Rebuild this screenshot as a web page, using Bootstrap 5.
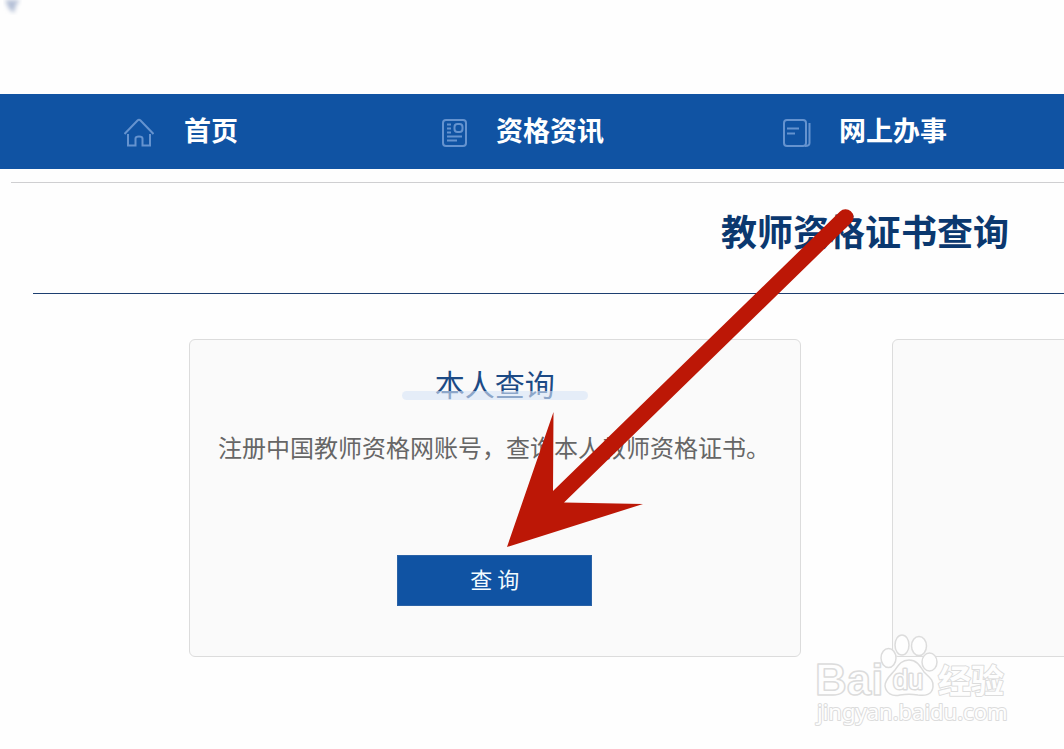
<!DOCTYPE html>
<html lang="zh-CN">
<head>
<meta charset="utf-8">
<meta name="viewport" content="width=device-width, initial-scale=1">
<title>教师资格证书查询</title>
<link href="https://cdn.jsdelivr.net/npm/bootstrap@5.3.0/dist/css/bootstrap.min.css" rel="stylesheet">
<style>
  body { font-family: "Noto Sans CJK SC", sans-serif; background: #fefefe; min-height: 100vh; overflow: hidden; }
  .site-head { height: 94px; }
  .head-mark { width: 28px; height: 24px; display: block; }
  .site-nav { background: #1053a3; height: 75px; padding: 0 0 4px 124px; }
  .nav-grid { display: grid; grid-template-columns: 318px 341px 1fr; width: 100%; }
  .nav-item-link { color: #fff; font-size: 27px; line-height: 40px; font-weight: 700; text-decoration: none; white-space: nowrap; }
  .nav-item-link svg { width: 30px; height: 30px; fill: none; stroke: #6593cf; stroke-width: 2; margin-top: 6px; flex: none; }
  .gap-home { gap: 30px; }
  .gap-doc { gap: 24px; }
  .gap-work { gap: 26px; }
  .top-rule { height: 1px; background: #cfcfd1; margin: 13px 0 0 11px; }
  .title-bar { margin-left: 33px; padding: 20px 55px 0 0; height: 111px; border-bottom: 1px solid #1d3f70; }
  .title-bar h1 { font-size: 36px; line-height: 54px; font-weight: 700; color: #0b386f; margin: 0; }
  .query-row { margin: 45px 0 0 189px; gap: 91px; }
  .query-card { flex: 0 0 calc(70% - 1px); height: 318px; background: #fafafa; border: 1px solid #dcdcdc; border-radius: 6px; padding: 22px 28px 0; }
  .query-name { position: relative; width: 186px; font-size: 30px; line-height: 42px; color: #1c4a85; text-align: center; font-weight: 400; margin: 0; }
  .query-name::after { content: ""; position: absolute; left: 0; right: 0; bottom: 4px; height: 9px; border-radius: 5px; background: rgba(215, 228, 247, .6); }
  .query-text { font-size: 24px; line-height: 36px; color: #666; margin: 25px 0 0; white-space: nowrap; }
  .query-btn { width: 195px; height: 51px; margin-top: 90px; border-radius: 0; background: #1053a3; border: 1px solid #2a62a6; color: #f2fbff; font-size: 22px; line-height: 32px; padding: 0 0 6px; }
  .query-btn:hover { background: #0c468c; color: #fff; }
  .pointer-arrow { position: absolute; left: 500px; top: 200px; width: 370px; height: 360px; pointer-events: none; }
  .watermark { position: absolute; left: 810px; top: 626px; width: 204px; height: 104px; pointer-events: none; }
</style>
</head>
<body class="position-relative">
<header>
  <div class="site-head">
    <svg class="head-mark" viewBox="0 0 28 24" aria-hidden="true">
      <defs><filter id="soft"><feGaussianBlur stdDeviation="2"/></filter></defs>
      <path d="M5 0H20L16 5L14 13L9 9Z" fill="#b4bfd6" filter="url(#soft)"/>
    </svg>
  </div>
  <nav class="site-nav d-flex align-items-center" aria-label="主导航">
    <div class="nav-grid">
      <a href="#" class="nav-item-link d-flex align-items-center gap-home">
        <svg viewBox="0 0 30 30" aria-hidden="true"><path d="M0.500 16L13.500 2.500Q15 1 16.500 2.500L29.500 16M4 16V27.500H11.500V20.500Q11.500 18.500 15 18.500T18.500 20.500V27.500H26V16"/></svg>
        <span>首页</span>
      </a>
      <a href="#" class="nav-item-link d-flex align-items-center gap-doc">
        <svg viewBox="0 0 30 30" aria-hidden="true"><rect x="1" y="2" width="23" height="26" rx="3"/><rect x="12.500" y="6" width="8" height="8" rx="3"/><path d="M5 6.500H9M5 10.500H9M5 14.500H9M5 18.500H20M5 22.500H15"/></svg>
        <span>资格资讯</span>
      </a>
      <a href="#" class="nav-item-link d-flex align-items-center gap-work">
        <svg viewBox="0 0 30 30" aria-hidden="true"><rect x="1" y="2" width="22" height="26" rx="3"/><path d="M4 10.500H16M4 15.500H12M22 28Q26.500 28 26.500 25V5"/></svg>
        <span>网上办事</span>
      </a>
    </div>
  </nav>
</header>
<main class="overflow-hidden">
  <div class="top-rule"></div>
  <div class="title-bar text-end"><h1>教师资格证书查询</h1></div>
  <div class="query-row d-flex">
    <section class="query-card d-flex flex-column align-items-center">
      <h2 class="query-name">本人查询</h2>
      <p class="query-text align-self-start">注册中国教师资格网账号，查询本人教师资格证书。</p>
      <button type="button" class="btn query-btn">查 询</button>
    </section>
    <section class="query-card" aria-label="查询"></section>
  </div>
</main>
<svg class="watermark" viewBox="0 0 204 104" aria-label="Baidu 经验">
  <g fill="#fefefe" stroke="#dcdcdc" stroke-width="1.500" stroke-linejoin="round">
    <text x="5" y="69" font-family="Liberation Sans, sans-serif" font-weight="700" font-size="44">Bai</text>
    <ellipse cx="78.500" cy="32" rx="7.500" ry="9.500"/>
    <ellipse cx="92" cy="19" rx="7" ry="10"/>
    <ellipse cx="109" cy="20" rx="7.500" ry="9.500"/>
    <ellipse cx="119.500" cy="36" rx="7.500" ry="9"/>
    <path d="M99 34C107 34 110 40 114 46C119 51 124 54 123 61C122 69 115 70 108 69C102 68 96 68 90 69C82 71 76 67 75 60C75 53 81 49 85 44C89 38 92 34 99 34Z"/>
    <text x="83" y="63" font-family="Liberation Sans, sans-serif" font-size="27" stroke-width="3" paint-order="stroke">du</text>
    <text x="128" y="67" font-family="Noto Sans CJK SC, sans-serif" font-weight="700" font-size="33" stroke-width="2" paint-order="stroke">经验</text>
    <text x="7" y="94" font-family="Noto Sans, sans-serif" font-size="22" stroke-width="2" paint-order="stroke">jingyan.baidu.com</text>
  </g>
</svg>
<svg class="pointer-arrow" viewBox="0 0 370 360" aria-hidden="true">
  <path fill="#bc1706" d="M340 11.500A8 8 0 0 1 352 22L64 302.500L143 304L7 347L53.500 212L53 291Z"/>
</svg>
<script src="https://cdn.jsdelivr.net/npm/bootstrap@5.3.0/dist/js/bootstrap.bundle.min.js"></script>
</body>
</html>
